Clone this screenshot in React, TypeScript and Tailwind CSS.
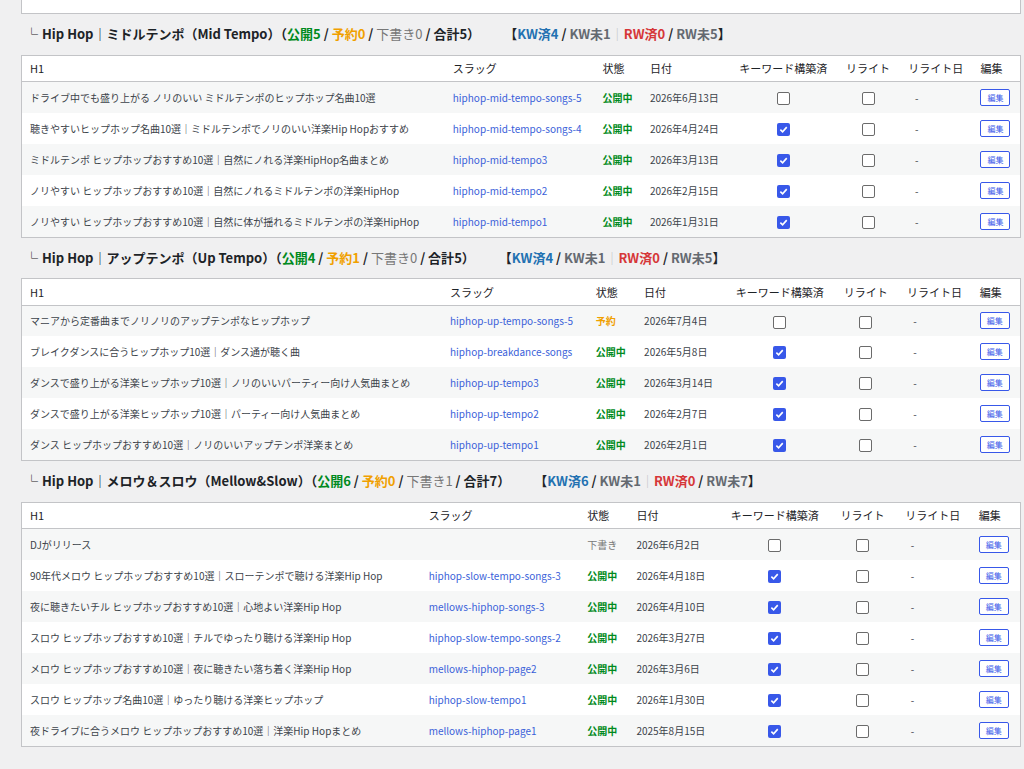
type Row = { h1: string; slug: string; st: "pub" | "res" | "draft"; date: string; kw: boolean };

const mid: Row[] = [
  { h1: "ドライブ中でも盛り上がる ノリのいい ミドルテンポのヒップホップ名曲10選", slug: "hiphop-mid-tempo-songs-5", st: "pub", date: "2026年6月13日", kw: false },
  { h1: "聴きやすいヒップホップ名曲10選｜ミドルテンポでノリのいい洋楽Hip Hopおすすめ", slug: "hiphop-mid-tempo-songs-4", st: "pub", date: "2026年4月24日", kw: true },
  { h1: "ミドルテンポ ヒップホップおすすめ10選｜自然にノれる洋楽HipHop名曲まとめ", slug: "hiphop-mid-tempo3", st: "pub", date: "2026年3月13日", kw: true },
  { h1: "ノリやすい ヒップホップおすすめ10選｜自然にノれるミドルテンポの洋楽HipHop", slug: "hiphop-mid-tempo2", st: "pub", date: "2026年2月15日", kw: true },
  { h1: "ノリやすい ヒップホップおすすめ10選｜自然に体が揺れるミドルテンポの洋楽HipHop", slug: "hiphop-mid-tempo1", st: "pub", date: "2026年1月31日", kw: true },
];
const up: Row[] = [
  { h1: "マニアから定番曲までノリノリのアップテンポなヒップホップ", slug: "hiphop-up-tempo-songs-5", st: "res", date: "2026年7月4日", kw: false },
  { h1: "ブレイクダンスに合うヒップホップ10選｜ダンス通が聴く曲", slug: "hiphop-breakdance-songs", st: "pub", date: "2026年5月8日", kw: true },
  { h1: "ダンスで盛り上がる洋楽ヒップホップ10選｜ノリのいいパーティー向け人気曲まとめ", slug: "hiphop-up-tempo3", st: "pub", date: "2026年3月14日", kw: true },
  { h1: "ダンスで盛り上がる洋楽ヒップホップ10選｜パーティー向け人気曲まとめ", slug: "hiphop-up-tempo2", st: "pub", date: "2026年2月7日", kw: true },
  { h1: "ダンス ヒップホップおすすめ10選｜ノリのいいアップテンポ洋楽まとめ", slug: "hiphop-up-tempo1", st: "pub", date: "2026年2月1日", kw: true },
];
const mellow: Row[] = [
  { h1: "DJがリリース", slug: "", st: "draft", date: "2026年6月2日", kw: false },
  { h1: "90年代メロウ ヒップホップおすすめ10選｜スローテンポで聴ける洋楽Hip Hop", slug: "hiphop-slow-tempo-songs-3", st: "pub", date: "2026年4月18日", kw: true },
  { h1: "夜に聴きたいチル ヒップホップおすすめ10選｜心地よい洋楽Hip Hop", slug: "mellows-hiphop-songs-3", st: "pub", date: "2026年4月10日", kw: true },
  { h1: "スロウ ヒップホップおすすめ10選｜チルでゆったり聴ける洋楽Hip Hop", slug: "hiphop-slow-tempo-songs-2", st: "pub", date: "2026年3月27日", kw: true },
  { h1: "メロウ ヒップホップおすすめ10選｜夜に聴きたい落ち着く洋楽Hip Hop", slug: "mellows-hiphop-page2", st: "pub", date: "2026年3月6日", kw: true },
  { h1: "スロウ ヒップホップ名曲10選｜ゆったり聴ける洋楽ヒップホップ", slug: "hiphop-slow-tempo1", st: "pub", date: "2026年1月30日", kw: true },
  { h1: "夜ドライブに合うメロウ ヒップホップおすすめ10選｜洋楽Hip Hopまとめ", slug: "mellows-hiphop-page1", st: "pub", date: "2025年8月15日", kw: true },
];

function Box({ on }: { on: boolean }) {
  return on ? (
    <span className="inline-flex w-[13px] h-[13px] rounded-[2px] bg-[#3858e9] items-center justify-center align-middle">
      <svg width="9" height="9" viewBox="0 0 10 10"><path d="M1.5 5.2 4 7.6 8.6 2.4" stroke="white" strokeWidth="1.8" fill="none" /></svg>
    </span>
  ) : (
    <span className="inline-block w-[13px] h-[13px] rounded-[2px] border border-[#6b6b6b] bg-white align-middle" />
  );
}

function Status({ st }: { st: Row["st"] }) {
  if (st === "pub") return <span className="text-[#008a20] font-bold">公開中</span>;
  if (st === "res") return <span className="text-[#f0a000] font-bold">予約</span>;
  return <span className="text-[#777]">下書き</span>;
}

function Table({ rows }: { rows: Row[] }) {
  return (
    <div className="bg-white border border-[#c3c4c7]">
      <table className="w-full border-collapse text-[10px] text-[#3c434a] whitespace-nowrap">
        <thead>
          <tr className="h-[26px] border-b border-[#c3c4c7] text-[11px] text-[#1d2327]">
            <th className="text-left font-normal pl-2">H1</th>
            <th className="text-left font-normal px-2">スラッグ</th>
            <th className="text-left font-normal px-2">状態</th>
            <th className="text-left font-normal px-2">日付</th>
            <th className="text-center font-normal px-2">キーワード構築済</th>
            <th className="text-center font-normal px-2">リライト</th>
            <th className="text-center font-normal px-2">リライト日</th>
            <th className="text-left font-normal px-2">編集</th>
          </tr>
        </thead>
        <tbody>
          {rows.map((r, i) => (
            <tr key={i} className={`h-[31px] ${i % 2 === 0 ? "bg-[#f6f7f7]" : "bg-white"}`}>
              <td className="pl-2 pr-3">{r.h1}</td>
              <td className="px-2 text-[#3a5fd9]">{r.slug}</td>
              <td className="px-2"><Status st={r.st} /></td>
              <td className="px-2">{r.date}</td>
              <td className="px-2 text-center"><Box on={r.kw} /></td>
              <td className="px-2 text-center"><Box on={false} /></td>
              <td className="pl-4">-</td>
              <td className="px-2">
                <span className="inline-block border border-[#3858e9] rounded-[2px] text-[#3858e9] text-[8px] px-[6px] leading-[15px] bg-white">編集</span>
              </td>
            </tr>
          ))}
        </tbody>
      </table>
    </div>
  );
}

function Heading({ name, pub, res, draft, total, kw, kwn, rw, rwn }: { name: string; pub: number; res: number; draft: number; total: number; kw: number; kwn: number; rw: number; rwn: number }) {
  return (
    <h2 className="text-[13px] font-bold text-[#1d2327] pt-[10px] pb-[11px] pl-1 flex items-center">
      <span className="font-normal mr-1">└</span>
      <span>Hip Hop｜{name}（<span className="text-[#008a20]">公開{pub}</span> / <span className="text-[#f0a000]">予約{res}</span> / <span className="text-[#777] font-normal">下書き{draft}</span> / 合計{total}）</span>
      <span className="ml-6">【<span className="text-[#2271b1]">KW済{kw}</span> / <span className="text-[#646970]">KW未{kwn}</span><span className="text-[#c3c4c7] font-normal">｜</span><span className="text-[#d63638]">RW済{rw}</span> / <span className="text-[#646970]">RW未{rwn}</span>】</span>
    </h2>
  );
}

export default function App() {
  return (
    <div className="min-h-[769px] bg-[#f0f0f1] pl-[21px] pr-[3px]" style={{ fontFamily: '"Noto Sans CJK JP", "Noto Sans", sans-serif' }}>
      <div className="h-[14px] bg-white border border-t-0 border-[#c3c4c7]" />
      <Heading name="ミドルテンポ（Mid Tempo）" pub={5} res={0} draft={0} total={5} kw={4} kwn={1} rw={0} rwn={5} />
      <Table rows={mid} />
      <Heading name="アップテンポ（Up Tempo）" pub={4} res={1} draft={0} total={5} kw={4} kwn={1} rw={0} rwn={5} />
      <Table rows={up} />
      <Heading name="メロウ＆スロウ（Mellow&Slow）" pub={6} res={0} draft={1} total={7} kw={6} kwn={1} rw={0} rwn={7} />
      <Table rows={mellow} />
    </div>
  );
}
